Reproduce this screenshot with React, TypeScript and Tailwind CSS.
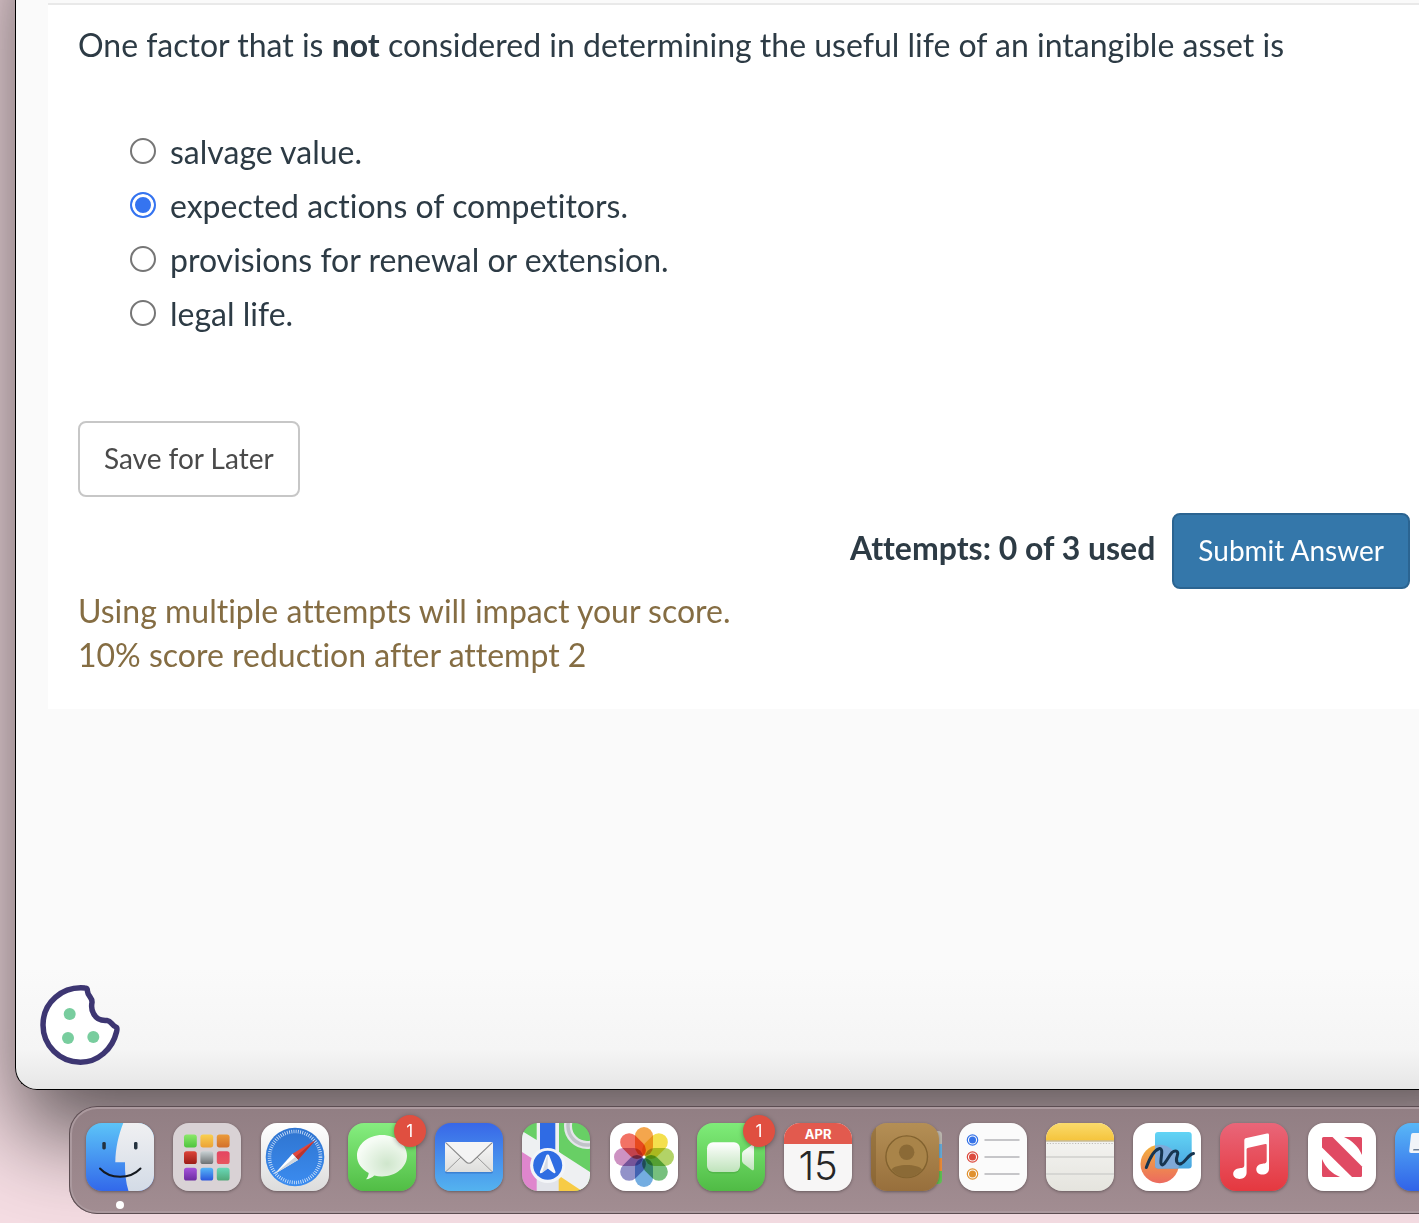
import { useState } from "react";
import type { ReactNode } from "react";

const options = [
  "salvage value.",
  "expected actions of competitors.",
  "provisions for renewal or extension.",
  "legal life.",
];

type GradientProps = { id: string; from: string; to: string };

const Gradient = ({ id, from, to }: GradientProps) => (
  <linearGradient id={id} x1="0" y1="0" x2="0" y2="1">
    <stop offset="0" stopColor={from} />
    <stop offset="1" stopColor={to} />
  </linearGradient>
);

const Svg = ({ children }: { children: ReactNode }) => (
  <svg viewBox="0 0 68 68" className="block size-full" aria-hidden="true">
    {children}
  </svg>
);

const Finder = () => (
  <Svg>
    <defs>
      <Gradient id="finder-blue" from="#5cc4f8" to="#3268ea" />
      <Gradient id="finder-light" from="#f0f0f2" to="#d3dbe6" />
    </defs>
    <rect width="68" height="68" fill="url(#finder-blue)" />
    <path
      d="M37.300 0C32.500 12 29.500 25 29.300 39.300H39C38.800 50 39.800 60 42.500 68H68V0Z"
      fill="url(#finder-light)"
    />
    <rect x="16.300" y="19" width="3.500" height="7.500" rx="1.400" fill="#24323f" />
    <rect x="48" y="19" width="3.500" height="7.500" rx="1.400" fill="#24323f" />
    <path
      d="M14 45.500C24 56.500 44 56.500 54.500 45.500"
      fill="none"
      stroke="#15191f"
      strokeWidth="2"
      strokeLinecap="round"
    />
  </Svg>
);

const launchpadColors = [
  ["#8be86a", "#4fc43f"],
  ["#f9cf4f", "#eca236"],
  ["#eb9b3a", "#d3702c"],
  ["#dd4338", "#9c1d18"],
  ["#c9d1d4", "#6c7173"],
  ["#e44562", "#e8555f"],
  ["#a653dc", "#6c2ba0"],
  ["#55b7f8", "#2b56dc"],
  ["#68d9b8", "#51a778"],
];

const Launchpad = () => (
  <Svg>
    <rect width="68" height="68" fill="#d9d2d5" />
    {launchpadColors.map(([from, to], i) => (
      <g key={i}>
        <Gradient id={`pad-${i}`} from={from} to={to} />
        <rect
          x={11 + (i % 3) * 16.4}
          y={11.6 + Math.floor(i / 3) * 16.6}
          width="12.800"
          height="12.800"
          rx="2.600"
          fill={`url(#pad-${i})`}
        />
      </g>
    ))}
  </Svg>
);

const Safari = () => (
  <Svg>
    <defs>
      <Gradient id="safari-bg" from="#ffffff" to="#dcdcdc" />
      <Gradient id="safari-dial" from="#2f74cf" to="#3b8cf0" />
    </defs>
    <rect width="68" height="68" fill="url(#safari-bg)" />
    <circle cx="34" cy="34" r="29.300" fill="url(#safari-dial)" />
    <circle
      cx="34"
      cy="34"
      r="25.500"
      fill="none"
      stroke="#d6e6fa"
      strokeWidth="3.600"
      strokeDasharray="0.800 1.425"
    />
    <path d="M54.500 17L31.500 30.800L37 37Z" fill="#e2483d" />
    <path d="M54.500 17L34.200 34L37 37Z" fill="#b9352f" />
    <path d="M13.500 51L31.500 30.800L37 37Z" fill="#ffffff" />
    <path d="M13.500 51L34.200 34L37 37Z" fill="#cfd6de" />
  </Svg>
);

const Messages = () => (
  <Svg>
    <defs>
      <Gradient id="msg-bg" from="#86ee80" to="#51bd45" />
      <radialGradient id="msg-bubble" cx="0.6" cy="0.65" r="0.6">
        <stop offset="0" stopColor="#cfe6cc" />
        <stop offset="1" stopColor="#f6fcf5" />
      </radialGradient>
    </defs>
    <rect width="68" height="68" fill="url(#msg-bg)" />
    <path
      d="M34 12C47.800 12 59 21.300 59 32.700S47.800 53.400 34 53.400C31.300 53.400 28.700 53 26.300 52.400C24 54.500 21 56 18 56.200C19.500 54.600 20.500 52.500 20.700 49.900C13.600 46.300 9 40 9 32.700C9 21.300 20.200 12 34 12Z"
      fill="url(#msg-bubble)"
    />
  </Svg>
);

const Mail = () => (
  <Svg>
    <defs>
      <Gradient id="mail-bg" from="#3867e8" to="#54b3ef" />
      <Gradient id="mail-env" from="#f7f7f7" to="#dededc" />
    </defs>
    <rect width="68" height="68" fill="url(#mail-bg)" />
    <rect x="10" y="20" width="48" height="30.500" rx="1.800" fill="#2a61b8" opacity="0.5" />
    <rect x="10" y="19" width="48" height="30" rx="1.800" fill="url(#mail-env)" />
    <path d="M11 48.500L26 34M57 48.500L42 34" stroke="#9a9a9a" strokeWidth="1" />
    <path
      d="M11 19.800L30.500 38.500Q34 42 37.500 38.500L57 19.800"
      fill="#f4f4f4"
      stroke="#8b8b8b"
      strokeWidth="1.100"
    />
  </Svg>
);

const Maps = () => (
  <Svg>
    <rect width="68" height="68" fill="#68cf65" />
    <path d="M0 27L22 38V68H0Z" fill="#df86cd" />
    <path d="M36 50L64 68H36Z" fill="#f7cb45" />
    <path d="M0 8L14.700 17V0H37V29L68 49V63L60 68L36 52L0 29Z" fill="#eef0f2" />
    <path d="M37 52L62 68H68V60Z" fill="#eef0f2" />
    <rect x="14.700" y="40" width="22" height="28" fill="#e2e4ea" />
    <rect x="18" width="15.300" height="40" fill="#2f6be4" />
    <circle cx="65" cy="3" r="19" fill="none" stroke="#e4e5e9" strokeWidth="8" />
    <circle cx="65" cy="3" r="19" fill="none" stroke="#c0c3c8" strokeWidth="3.500" />
    <circle cx="25.700" cy="42.500" r="17.600" fill="#f3f5f8" />
    <circle cx="25.700" cy="42.300" r="14.500" fill="#2f6de2" />
    <path
      d="M25.700 31.500C26.500 31.500 27 32 27.300 32.800L33.300 48.200C34 50 32.700 50.800 31.300 49.800L25.700 45.500L20.100 49.800C18.700 50.800 17.400 50 18.100 48.200L24.100 32.800C24.400 32 24.900 31.500 25.700 31.500Z"
      fill="#f7f9fc"
    />
    <path d="M25.700 31.500V45.500L20.100 49.800Z" fill="#d5dbe5" />
  </Svg>
);

const petals = [
  "#f3962d",
  "#f2da2e",
  "#a5cb4c",
  "#5fb566",
  "#5c9fdc",
  "#7f7fc0",
  "#c47fb8",
  "#f0594a",
];

const Photos = () => (
  <Svg>
    <rect width="68" height="68" fill="#ffffff" />
    {petals.map((color, i) => (
      <rect
        key={color}
        x="25"
        y="4"
        width="18"
        height="29"
        rx="9"
        fill={color}
        className="mix-blend-multiply"
        opacity="0.85"
        transform={`rotate(${i * 45} 34 34)`}
      />
    ))}
    <circle cx="34" cy="34" r="1.500" fill="#ffffff" />
  </Svg>
);

const FaceTime = () => (
  <Svg>
    <defs>
      <Gradient id="ft-bg" from="#7fec79" to="#50bb45" />
      <Gradient id="ft-cam" from="#ffffff" to="#bfe3bb" />
    </defs>
    <rect width="68" height="68" fill="url(#ft-bg)" />
    <rect x="10" y="20.500" width="33" height="30" rx="6" fill="#46a53d" opacity="0.5" />
    <rect x="10" y="19.300" width="33" height="29.700" rx="6" fill="url(#ft-cam)" />
    <path
      d="M45 31C45 29.500 45.600 28.500 46.600 27.700L54.500 22.300C56 21.300 57 21.900 57 23.500V45.500C57 47.200 56 47.800 54.500 46.700L46.600 40.700C45.600 39.900 45 38.900 45 37.500Z"
      fill="url(#ft-cam)"
    />
  </Svg>
);

const Calendar = () => (
  <div className="flex size-full flex-col bg-[#f7f6f6] text-center font-['Inter',sans-serif]">
    <span className="h-[21px] bg-[#e25a4e] text-[13px] leading-[23px] font-bold text-white">
      APR
    </span>
    <span className="text-[40px] leading-[44px] font-light text-[#262626]">15</span>
  </div>
);

const Contacts = () => (
  <Svg>
    <defs>
      <Gradient id="book" from="#b48f55" to="#976f3c" />
    </defs>
    <rect width="68" height="68" fill="url(#book)" />
    <path d="M0 0H5V68H0Z" fill="#7c5a2d" opacity="0.45" />
    <circle cx="35.700" cy="33.700" r="20.800" fill="#a98449" stroke="#82622f" strokeWidth="1.400" />
    <circle cx="35.700" cy="29.300" r="7.700" fill="#8b6a36" />
    <path d="M20.500 46.500C24 40.500 47.500 40.500 51 46.500C43 57 28.500 57 20.500 46.500Z" fill="#8b6a36" />
  </Svg>
);

const Reminders = () => (
  <Svg>
    <rect width="68" height="68" fill="#fbfbfb" />
    {["#3673e8", "#dc4a3e", "#e0912f"].map((color, i) => (
      <g key={color}>
        <circle cx="13.500" cy={17 + i * 17} r="5.200" fill="none" stroke={color} strokeWidth="1.200" />
        <circle cx="13.500" cy={17 + i * 17} r="3.500" fill={color} />
        <path d={`M25.500 ${17 + i * 17}H60.500`} stroke="#b4b4b8" strokeWidth="1.400" />
      </g>
    ))}
  </Svg>
);

const Notes = () => (
  <Svg>
    <defs>
      <Gradient id="notes-top" from="#fadb6c" to="#f5c43c" />
      <Gradient id="notes-paper" from="#f8f8f7" to="#e5e4de" />
    </defs>
    <rect width="68" height="68" fill="url(#notes-paper)" />
    <rect width="68" height="17.500" fill="url(#notes-top)" />
    <path d="M0 18H68" stroke="#b39f66" strokeWidth="1" />
    <path d="M1 20.500H68" stroke="#bdbdb9" strokeWidth="1.200" strokeDasharray="1.200 1.600" />
    <path d="M0 34H68M0 51H68" stroke="#d0d0cd" strokeWidth="1.300" />
  </Svg>
);

const Freeform = () => (
  <Svg>
    <defs>
      <Gradient id="ff-circle" from="#f2b23c" to="#ec6a5f" />
      <Gradient id="ff-square" from="#62d4f5" to="#4aa5df" />
    </defs>
    <rect width="68" height="68" fill="#ffffff" />
    <circle cx="26.700" cy="41" r="19.200" fill="url(#ff-circle)" />
    <rect x="22" y="9" width="36.700" height="36.400" rx="3" fill="url(#ff-square)" />
    <path
      d="M22 22.400A19.200 19.200 0 0 1 45.300 45.400H25A3 3 0 0 1 22 42.400Z"
      fill="#7fa9d8"
    />
    <path
      d="M13.300 44.500C16 37 21 27 26 25.700C31.500 24.500 27 36 28 40.500C30 46 35 34 39 29.500C42 26.800 46 27.500 44.300 32.500C42 39 44.500 42 48.500 40.500C53 38.500 55 31.500 60.500 30.500"
      fill="none"
      stroke="#173550"
      strokeWidth="3"
      strokeLinecap="round"
      strokeLinejoin="round"
    />
  </Svg>
);

const Music = () => (
  <Svg>
    <defs>
      <Gradient id="music-bg" from="#e96679" to="#e5383f" />
    </defs>
    <rect width="68" height="68" fill="url(#music-bg)" />
    <path
      d="M24.300 17.500C24.300 16 25 15.300 26.500 15L47 10.500C48.500 10.200 49 10.700 49 12V45.500C49 49.500 46 51.500 42.500 51.500C39 51.500 36.300 49.500 36.300 46.500C36.300 43 39 41.300 42.500 40.800C45.500 40.300 46.700 40 46.700 37.500V22.300C46.700 21.200 46.200 20.900 45.200 21.100L28.500 24.700C27 25 26.600 25.500 26.600 26.800V49.500C26.600 53.500 23.500 55.900 19.500 55.900C16 55.900 13.200 54 13.200 51C13.200 47.500 16 45.800 19.500 45.300C23 44.800 24.300 44.500 24.300 42Z"
      fill="#ffffff"
    />
  </Svg>
);

const News = () => (
  <Svg>
    <rect width="68" height="68" fill="#ffffff" />
    <g fill="#e04a63">
      <path d="M15.500 14H24.500L54 43.500V52.500Q54 54 52.500 54H44L14 24.500V15.500Q14 14 15.500 14Z" />
      <path d="M36 14H52.500Q54 14 54 15.500V32C50.500 23.500 44 17.500 36 14Z" />
      <path d="M14 36C17.500 44.500 24 50.500 32 54H15.500Q14 54 14 52.500Z" />
    </g>
  </Svg>
);

const Keynote = () => (
  <Svg>
    <defs>
      <Gradient id="key-bg" from="#58b7f7" to="#3163e8" />
    </defs>
    <rect width="68" height="68" fill="url(#key-bg)" />
    <path d="M18 10H50L54 30H16Q14 30 14.200 28L16 12Q16.200 10 18 10Z" fill="#f1f4f8" />
    <path d="M18.500 26H52V27.500H18Z" fill="#6d7f95" />
  </Svg>
);

type DockApp = { name: string; icon: ReactNode; badge?: number; running?: boolean };

const dockApps: DockApp[] = [
  { name: "Finder", icon: <Finder />, running: true },
  { name: "Launchpad", icon: <Launchpad /> },
  { name: "Safari", icon: <Safari /> },
  { name: "Messages", icon: <Messages />, badge: 1 },
  { name: "Mail", icon: <Mail /> },
  { name: "Maps", icon: <Maps /> },
  { name: "Photos", icon: <Photos /> },
  { name: "FaceTime", icon: <FaceTime />, badge: 1 },
  { name: "Calendar", icon: <Calendar /> },
  { name: "Contacts", icon: <Contacts /> },
  { name: "Reminders", icon: <Reminders /> },
  { name: "Notes", icon: <Notes /> },
  { name: "Freeform", icon: <Freeform /> },
  { name: "Music", icon: <Music /> },
  { name: "News", icon: <News /> },
  { name: "Keynote", icon: <Keynote /> },
];

const Dock = () => (
  <nav
    aria-label="Dock"
    className="relative mt-4 mr-[-61px] mb-[9px] ml-[69px] flex h-[108px] shrink-0 items-start justify-between rounded-[28px] bg-linear-to-b from-[#917e83] to-[#a28d92] px-[17px] pt-[17px] shadow-[inset_0_0_0_1px_#5c4d52,inset_0_0_0_3px_#ab999e]"
  >
    {dockApps.map((app) => (
      <button key={app.name} type="button" aria-label={app.name} className="relative size-[68px]">
        {/* Pestañas del libro de contactos */}
        {app.name === "Contacts" && (
          <span className="absolute top-2 -right-[3px] flex h-[53px] w-3 flex-col overflow-hidden rounded-r">
            <span className="flex-1 bg-[#b9b5ad]" />
            <span className="flex-1 bg-[#63a9d8]" />
            <span className="flex-1 bg-[#ec8b35]" />
            <span className="flex-1 bg-[#5fbf52]" />
          </span>
        )}
        <span className="relative block size-full overflow-hidden rounded-[16px] shadow-[0_1px_3px_rgba(0,0,0,0.35)]">
          {app.icon}
        </span>
        {app.badge && (
          <span className="absolute -top-2 -right-[10px] size-8 rounded-full bg-[#e04f40] text-center font-['Inter',sans-serif] text-[17px] leading-8 text-white shadow-[0_1px_5px_rgba(0,0,0,0.35)]">
            {app.badge}
          </span>
        )}
        {app.running && (
          <span className="absolute -bottom-[18px] left-[30px] size-2 rounded-full bg-white" />
        )}
      </button>
    ))}
  </nav>
);

const CookieButton = () => (
  <button type="button" aria-label="Cookie settings" className="mt-auto mb-6 ml-6 size-20">
    <svg viewBox="0 0 80 80" className="block size-full" aria-hidden="true">
      <path
        d="M45 3C47 3 47.500 4.500 47.500 6.500C48 11.500 52.500 12.500 52 17.500C51.300 21 51.500 25 53.500 28.500C56 33.500 61 36 67 35.500C71.500 36 71.500 40.500 76 42C77.500 42.500 77 45 76.500 47C72.500 64 58 77.200 40.500 77.200C19.500 77.200 3 60.500 3 40C3 17.500 22 1 45 3Z"
        fill="#ffffff"
        stroke="#3d3672"
        strokeWidth="5.500"
        strokeLinejoin="round"
      />
      <g fill="#78cd9e">
        <circle cx="29.700" cy="29" r="6" />
        <circle cx="28" cy="53" r="6" />
        <circle cx="53.300" cy="52" r="6" />
      </g>
    </svg>
  </button>
);

const Question = () => {
  const [selected, setSelected] = useState(1);

  return (
    <form
      onSubmit={(e) => e.preventDefault()}
      className="ml-8 border-t-2 border-[#e9e9e9] bg-white pt-[18px] pr-[9px] pb-8 pl-[30px] text-[32px] leading-[44px] [font-variant-ligatures:none]"
    >
      <p id="question">
        One factor that is <strong>not</strong> considered in determining the
        useful life of an intangible asset is
      </p>

      {/* Opciones */}
      <fieldset aria-labelledby="question" className="mt-[59px] pl-[52px]">
        {options.map((option, i) => (
          <label key={option} className="flex h-[54px] items-start gap-[14px]">
            <input
              type="radio"
              name="answer"
              checked={selected === i}
              onChange={() => setSelected(i)}
              className="mt-3 size-[26px] shrink-0 appearance-none rounded-full border-2 border-[#767676] bg-white checked:border-[#3574f0] checked:bg-[#3574f0] checked:shadow-[inset_0_0_0_3px_white]"
            />
            <span className="mt-1">{option}</span>
          </label>
        ))}
      </fieldset>

      <button
        type="button"
        className="mt-[79px] block h-[76px] rounded-lg border-2 border-[#c7c7c7] px-6 pb-0.5 text-[28px] text-[#4a4a4a]"
      >
        Save for Later
      </button>

      {/* Intentos y envío */}
      <div className="mt-4 flex items-center justify-end gap-[17px]">
        <strong className="pb-1.5">Attempts: 0 of 3 used</strong>
        <button
          type="submit"
          className="h-[76px] rounded-lg border-2 border-[#2b6491] bg-[#3477aa] px-6 pb-0.5 text-[28px] text-white"
        >
          Submit Answer
        </button>
      </div>

      <p className="text-[#856d43]">
        Using multiple attempts will impact your score.
        <br />
        10% score reduction after attempt 2
      </p>
    </form>
  );
};

const App = () => (
  <div className="flex min-h-screen flex-col overflow-hidden bg-[#f5dde3] font-['Lato',sans-serif] text-[#2d3b45]">
    {/* Ventana del navegador, sigue más allá de los bordes */}
    <main className="-mt-24 -mr-24 ml-[15px] flex flex-1 flex-col rounded-bl-[22px] border-b border-l border-black bg-[linear-gradient(to_top,#e6e6e6,#f5f5f5_40px,#fafafa_120px)] pt-[99px] pr-24 shadow-[0_44px_90px_rgba(0,0,0,0.62)]">
      <Question />
      <CookieButton />
    </main>
    <Dock />
  </div>
);

export default App;
